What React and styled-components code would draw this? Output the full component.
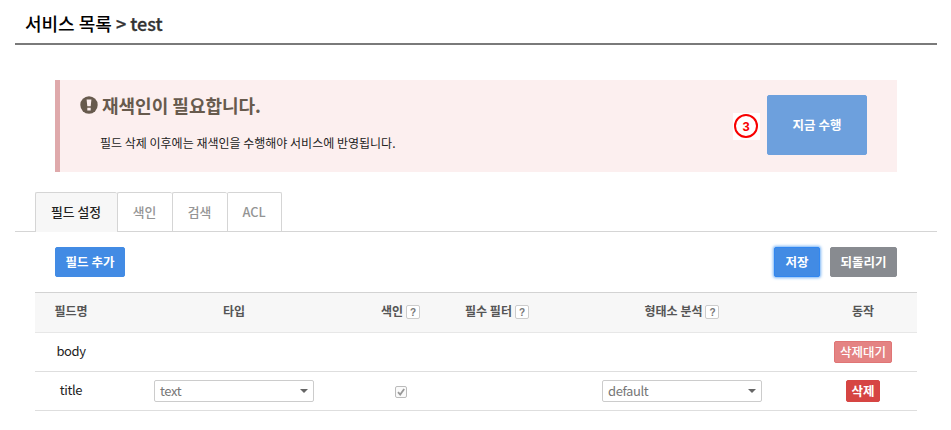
import React from 'react';
import styled, { createGlobalStyle } from 'styled-components';

const GlobalStyle = createGlobalStyle`
  * { box-sizing: border-box; }
  body {
    margin: 0;
    background: #fff;
    color: #222;
    font: 12px/20px "Noto Sans CJK KR", sans-serif;
  }
  button { font-family: inherit; }
`;

const Page = styled.main`
  width: 951px;
  height: 430px;
  padding: 0 14px 0 15px;
  overflow: hidden;
`;

const Title = styled.h1`
  margin: 0;
  height: 45px;
  padding: 10px 0 0 10px;
  border-bottom: 2px solid #7a7a7a;
  color: #000;
  font-size: 18px;
  font-weight: 500;
  line-height: 26px;
  white-space: pre;
`;

const Crumb = styled.span`
  color: #333;
  -webkit-text-stroke: 0.3px #333;
`;

const Alert = styled.section`
  display: flex;
  justify-content: space-between;
  align-items: flex-start;
  height: 92px;
  margin: 35px 40px 20px;
  padding: 15px 30px 0 20px;
  border-left: 5px solid #dfa9ab;
  background: #fcefef;
`;

const AlertTitle = styled.h2`
  display: flex;
  align-items: center;
  gap: 4px;
  margin: -3px 0 0;
  color: #675a4d;
  font-size: 18px;
  font-weight: 700;
  line-height: 26px;
`;

const AlertText = styled.p`
  margin: 15px 0 0 20px;
  line-height: 20px;
`;

const AlertActions = styled.div`
  display: flex;
  gap: 7px;
`;

const Step = styled.svg`
  width: 27px;
  height: 27px;
  margin-top: 18px;
  background: #fff;
`;

const Button = styled.button`
  width: ${(p) => p.$width}px;
  height: ${(p) => p.$height || 30}px;
  padding: 0 0 1px;
  border: 1px solid ${(p) => p.$border || p.$color};
  border-radius: 2px;
  background: ${(p) => p.$color};
  box-shadow: ${(p) => (p.$focused ? '0 0 3px 1px #78b4f5' : 'none')};
  color: #fff;
  font-size: 12.5px;
  font-weight: ${(p) => p.$weight || 700};
  line-height: 18px;
  white-space: nowrap;
`;

const Tabs = styled.nav`
  display: flex;
  height: 40px;
  padding-left: 20px;
  border-bottom: 1px solid #d5d5d5;
`;

const Tab = styled.div`
  width: ${(p) => p.$width}px;
  height: ${(p) => (p.$active ? 40 : 39)}px;
  padding-right: 1px;
  border: 1px solid #d5d5d5;
  border-width: 1px 0 0 1px;
  border-radius: 2px 2px 0 0;
  background: ${(p) => (p.$active ? '#f7f7f7' : '#fff')};
  color: ${(p) => (p.$active ? '#222' : '#949494')};
  font-size: 12.8px;
  font-weight: 500;
  line-height: 38px;
  text-align: center;

  &:last-child {
    border-right-width: 1px;
  }
`;

const Toolbar = styled.div`
  display: flex;
  justify-content: space-between;
  height: 60px;
  padding: 15px 40px;
`;

const ButtonGroup = styled.div`
  display: flex;
  gap: 10px;
`;

const Table = styled.div`
  width: 882px;
  margin-left: 20px;
  border-top: 1px solid #d3d3d3;
`;

const Row = styled.div`
  display: grid;
  grid-template-columns: 72px 254px 79px 114px 256px 106px;
  align-items: center;
  height: 39px;
  border-bottom: 1px solid #dedede;
`;

const HeadRow = styled(Row)`
  height: 40px;
  padding-bottom: 4px;
  background: #f7f7f7;
  border-bottom-color: #e7e7e7;
  color: #555;
  font-weight: 700;
`;

const Cell = styled.div`
  display: flex;
  justify-content: center;
  align-items: center;
  gap: 3px;
`;

const FieldName = styled(Cell)`
  padding-bottom: 2px;
  font-size: 13px;
  letter-spacing: -0.4px;
`;

const HelpBox = styled.span`
  width: 14px;
  height: 14px;
  margin-top: 2px;
  border: 1px solid #ccc;
  border-radius: 2px;
  background: #fff;
  color: #777;
  font: 700 10px/13px "Liberation Sans", sans-serif;
  text-align: center;
`;

const SelectBox = styled.div`
  display: flex;
  justify-content: space-between;
  align-items: center;
  width: 160px;
  height: 22px;
  padding: 0 5px;
  border: 1px solid #ccc;
  border-radius: 2px;
  color: #777;
  font-size: 13px;
  letter-spacing: -0.4px;
  line-height: 20px;
`;

const Caret = styled.svg`
  width: 8px;
  height: 4px;
`;

const Checkbox = styled.svg`
  width: 12px;
  height: 12px;
  margin-top: 2px;
`;

const columns = [
  { label: '필드명' },
  { label: '타입' },
  { label: '색인', help: true },
  { label: '필수 필터', help: true },
  { label: '형태소 분석', help: true },
  { label: '동작' },
];

const tabs = [
  { label: '필드 설정', width: 82, active: true },
  { label: '색인', width: 55 },
  { label: '검색', width: 55 },
  { label: 'ACL', width: 55 },
];

function Select({ value }) {
  return (
    <SelectBox>
      {value}
      <Caret viewBox="0 0 8 4"><path d="M0 0h8L4 4z" fill="#666" /></Caret>
    </SelectBox>
  );
}

export default function App() {
  return (
    <Page>
      <GlobalStyle />
      <Title>서비스 목록<Crumb> &gt; test</Crumb></Title>
      <Alert>
        <div>
          <AlertTitle>
            <svg width="18" height="18" viewBox="0 0 18 18">
              <circle cx="9" cy="9" r="8.7" fill="#675a4d" />
              <path d="M6.6 3.5h4.8l-.7 6.8H7.3zM7.3 11.7h3.4v2.7H7.3z" fill="#fcefef" />
            </svg>
            재색인이 필요합니다.
          </AlertTitle>
          <AlertText>필드 삭제 이후에는 재색인을 수행해야 서비스에 반영됩니다.</AlertText>
        </div>
        <AlertActions>
          <Step viewBox="0 0 27 27">
            <circle cx="13" cy="13" r="11" fill="none" stroke="#f80000" strokeWidth="2" />
            <text x="13" y="18" textAnchor="middle" fill="#f80000" fontFamily="Liberation Sans, sans-serif" fontSize="13" fontWeight="700">3</text>
          </Step>
          <Button $width={100} $height={60} $color="#6da0dd">지금 수행</Button>
        </AlertActions>
      </Alert>
      <Tabs>
        {tabs.map((t) => (
          <Tab key={t.label} $width={t.width} $active={t.active}>{t.label}</Tab>
        ))}
      </Tabs>
      <Toolbar>
        <Button $width={70} $color="#428be4">필드 추가</Button>
        <ButtonGroup>
          <Button $width={46} $color="#428be4" $border="#3187f1" $focused>저장</Button>
          <Button $width={67} $color="#888b90">되돌리기</Button>
        </ButtonGroup>
      </Toolbar>
      <Table>
        <HeadRow>
          {columns.map((c) => (
            <Cell key={c.label}>
              {c.label}
              {c.help && <HelpBox>?</HelpBox>}
            </Cell>
          ))}
        </HeadRow>
        <Row>
          <FieldName>body</FieldName>
          <Cell />
          <Cell />
          <Cell />
          <Cell />
          <Cell><Button $width={58} $height={22} $color="#e48383" $border="#e07575" $weight={500}>삭제대기</Button></Cell>
        </Row>
        <Row>
          <FieldName>title</FieldName>
          <Cell><Select value="text" /></Cell>
          <Cell>
            <Checkbox viewBox="0 0 12 12">
              <rect x=".5" y=".5" width="11" height="11" rx="1.5" fill="#fafafa" stroke="#bbb" />
              <path d="M3 6.2 5.2 8.6 9.2 3" fill="none" stroke="#999" strokeWidth="1.8" />
            </Checkbox>
          </Cell>
          <Cell />
          <Cell><Select value="default" /></Cell>
          <Cell><Button $width={34} $height={22} $color="#d64543">삭제</Button></Cell>
        </Row>
      </Table>
    </Page>
  );
}
